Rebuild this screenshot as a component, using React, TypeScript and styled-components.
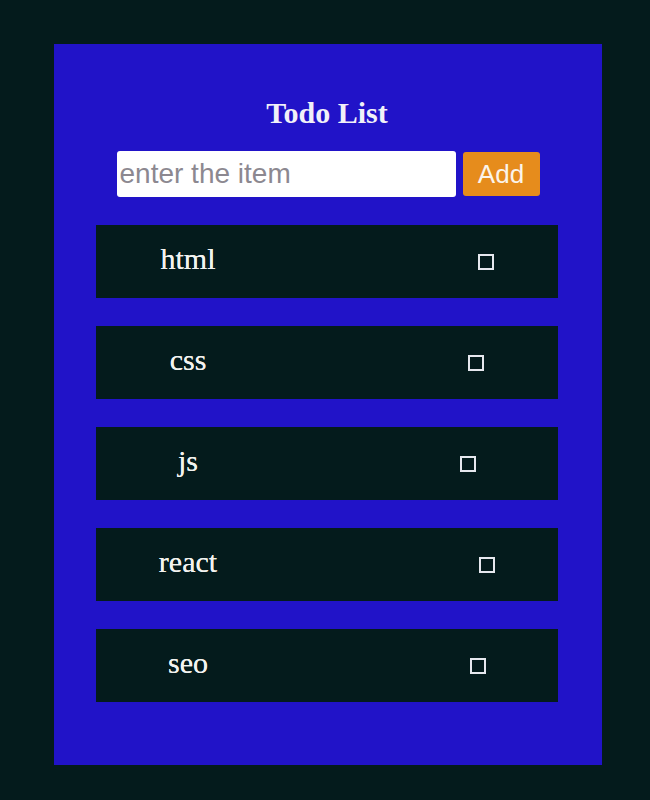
import React from "react";
import styled, { createGlobalStyle } from "styled-components";

const GlobalStyle = createGlobalStyle`
  html, body {
    margin: 0;
    padding: 0;
    background: #041b1c;
  }
  body {
    font-family: "Liberation Serif", "Times New Roman", serif;
  }
`;

const Page = styled.div`
  padding: 44px 0 35px 54px;
`;

const Panel = styled.main`
  width: 548px;
  box-sizing: border-box;
  background: #2113c8;
  padding: 52px 44px 63px 42px;
  display: flex;
  flex-direction: column;
  align-items: stretch;
`;

const Title = styled.h1`
  margin: 0;
  height: 34px;
  line-height: 34px;
  font-size: 30px;
  font-weight: bold;
  color: #f1f1f8;
  text-align: center;
  font-family: "Liberation Serif", "Times New Roman", serif;
`;

const Form = styled.form`
  margin-top: 21px;
  display: flex;
  justify-content: center;
  align-items: center;
  gap: 7px;
  padding-left: 2px;
`;

const Input = styled.input`
  width: 339px;
  height: 46px;
  box-sizing: border-box;
  border: none;
  border-radius: 3px;
  background: #ffffff;
  padding: 0 3px;
  font-family: "Liberation Sans", Arial, sans-serif;
  font-size: 28px;
  color: #333;
  outline: none;
  &::placeholder {
    color: #8c8890;
  }
`;

const AddButton = styled.button`
  width: 77px;
  height: 44px;
  border: none;
  border-radius: 3px;
  background: #e68c1c;
  color: #fbf4ea;
  font-family: "Liberation Sans", Arial, sans-serif;
  font-size: 26px;
  padding: 0;
  cursor: pointer;
`;

const List = styled.ul`
  list-style: none;
  margin: 28px 0 0;
  padding: 0;
  display: flex;
  flex-direction: column;
  gap: 28px;
`;

const Item = styled.li`
  height: 73px;
  background: #041b1c;
  display: flex;
  justify-content: center;
  align-items: center;
  gap: 262px;
`;

const Label = styled.span`
  font-size: 30px;
  color: #f3f3f0;
  margin-bottom: 6px;
  font-family: "Liberation Serif", "Times New Roman", serif;
  text-shadow: 0 0 0.4px #f3f3f0;
`;

const Box = styled.span`
  width: 16px;
  height: 16px;
  box-sizing: border-box;
  border: 2px solid #e6e8ee;
  flex: none;
`;

const items = ["html", "css", "js", "react", "seo"];

export default function App() {
  return (
    <>
      <GlobalStyle />
      <Page>
        <Panel>
          <Title>Todo List</Title>
          <Form onSubmit={(e) => e.preventDefault()}>
            <Input placeholder="enter the item" />
            <AddButton type="submit">Add</AddButton>
          </Form>
          <List>
            {items.map((t) => (
              <Item key={t}>
                <Label>{t}</Label>
                <Box />
              </Item>
            ))}
          </List>
        </Panel>
      </Page>
    </>
  );
}
